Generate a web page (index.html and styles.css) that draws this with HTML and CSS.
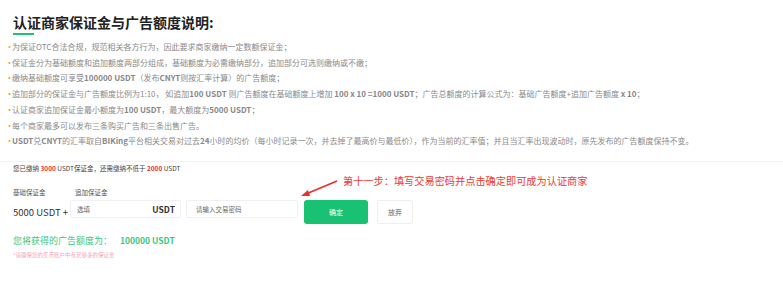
FILE: index.html
```html
<!DOCTYPE html>
<html lang="zh-CN">
<head>
    <meta charset="UTF-8">
    <meta name="viewport" content="width=device-width, initial-scale=1.0">
    <title>认证商家保证金</title>
    <link rel="stylesheet" href="styles.css">
</head>
<body>
    <div class="page">
        <h2 class="title">认证商家保证金与广告额度说明:</h2>
        <div class="title-bar"></div>
        <ul class="rules">
            <li>为保证OTC合法合规，规范相关各方行为，因此要求商家缴纳一定数额保证金；</li>
            <li>保证金分为基础额度和追加额度两部分组成，基础额度为必需缴纳部分，追加部分可选则缴纳或不缴；</li>
            <li>缴纳基础额度可享受<b>100000 USDT</b>（发布<b>CNYT</b>则按汇率计算）的广告额度；</li>
            <li>追加部分的保证金与广告额度比例为1:10， 如追加<b>100 USDT</b> 则广告额度在基础额度上增加 <b>100 x 10 =1000 USDT</b>；广告总额度的计算公式为：基础广告额度+追加广告额度 <b>x 10</b>；</li>
            <li>认证商家追加保证金最小额度为<b>100 USDT</b>，最大额度为<b>5000 USDT</b>；</li>
            <li>每个商家最多可以发布三条购买广告和三条出售广告。</li>
            <li><b>USDT</b>兑<b>CNYT</b>的汇率取自<b>BIKing</b>平台相关交易对过去<b>24</b>小时的均价（每小时记录一次，并去掉了最高价与最低价），作为当前的汇率值；并且当汇率出现波动时，原先发布的广告额度保持不变。</li>
        </ul>

        <div class="deposit">
            <p class="notice">您已缴纳 <span class="red">3000</span> USDT保证金，还需缴纳不低于 <span class="red">2000</span> USDT</p>
            <div class="labels">
                <span class="label-base">基础保证金</span>
                <span>追加保证金</span>
            </div>
            <div class="form-row">
                <span class="base-amount">5000 USDT +</span>
                <div class="field field-extra">
                    <span class="placeholder">选填</span>
                    <b class="unit">USDT</b>
                </div>
                <div class="field field-pwd">
                    <span class="placeholder">请输入交易密码</span>
                </div>
                <button class="btn-ok">确定</button>
                <button class="btn-cancel">放弃</button>
            </div>
            <p class="quota">您将获得的广告额度为： <b>100000 USDT</b></p>
            <p class="hint">*请确保您的买币账户中有足够多的保证金</p>

            <div class="callout">第十一步：填写交易密码并点击确定即可成为认证商家</div>
            <svg class="arrow" width="40" height="20" viewBox="0 0 40 20">
                <line x1="37" y1="2" x2="6" y2="15" stroke="#e8302c" stroke-width="1.8"/>
                <polygon points="1,17 8,11 10,17" fill="#e8302c"/>
            </svg>
        </div>
    </div>
</body>
</html>
```

FILE: styles.css
```css
body {
    margin: 0;
    background-color: #fff;
    font-family: "Noto Sans CJK SC", "Noto Sans", sans-serif;
    color: #333;
}

.page {
    padding: 12px 0 0 13px;
}

.title {
    margin: 0;
    font-size: 14px;
    line-height: 20px;
    font-weight: bold;
    color: #222;
}

.title-bar {
    width: 21px;
    height: 2px;
    margin-top: 1px;
    background-color: #1dc27a;
}

.rules {
    list-style: none;
    margin: 4px 0 0;
    padding: 0;
}

.rules li {
    font-size: 8px;
    line-height: 15.7px;
    color: #8a8a8a;
    white-space: nowrap;
}

.rules li b {
    font-weight: bold;
    color: #888;
}

.rules li::before {
    content: "•";
    color: #f5a623;
    display: inline-block;
    width: 7px;
    margin-left: -8px;
    font-size: 9px;
}

.deposit {
    position: relative;
    margin: 12px 0 0 -13px;
    padding-left: 13px;
    border-top: 1px solid #f1f1f1;
}

.notice {
    margin: 1px 0 0;
    font-size: 6.5px;
    line-height: 10px;
    color: #444;
}

.red {
    color: #f0302a;
    font-weight: bold;
}

.labels {
    display: flex;
    margin-top: 14px;
    font-size: 6.5px;
    line-height: 10px;
    color: #555;
}

.label-base {
    width: 62px;
}

.form-row {
    display: flex;
    align-items: flex-start;
    margin-top: 3px;
}

.base-amount {
    width: 57px;
    font-size: 9.5px;
    line-height: 24px;
    color: #333;
    white-space: nowrap;
}

.field {
    display: flex;
    align-items: center;
    justify-content: space-between;
    box-sizing: border-box;
    height: 18px;
    padding: 0 5px 0 6px;
    border: 1px solid #eef0f5;
    border-radius: 2px;
}

.field-extra {
    width: 111px;
}

.field-pwd {
    width: 112px;
    margin-left: 5px;
    padding-left: 9px;
}

.placeholder {
    font-size: 6.5px;
    color: #666;
}

.unit {
    font-size: 8.5px;
    color: #333;
}

.btn-ok, .btn-cancel {
    box-sizing: border-box;
    height: 24px;
    border-radius: 3px;
    font-family: inherit;
    font-size: 7px;
    cursor: pointer;
}

.btn-ok {
    width: 64px;
    margin-left: 6px;
    border: none;
    background-color: #19c173;
    color: #fff;
}

.btn-cancel {
    width: 36px;
    margin-left: 9px;
    border: 1px solid #eeeeee;
    background-color: #fff;
    color: #666;
}

.quota {
    margin: 10px 0 0;
    font-size: 9px;
    line-height: 12px;
    color: #3cc77e;
}

.quota b {
    margin-left: 6px;
    font-size: 8.5px;
}

.hint {
    margin: 3px 0 0;
    font-size: 5.5px;
    line-height: 10px;
    color: #f6a5b7;
}

.callout {
    position: absolute;
    left: 343px;
    top: 12px;
    font-size: 10.2px;
    line-height: 14px;
    color: #ee3a32;
    white-space: nowrap;
}

.arrow {
    position: absolute;
    left: 300px;
    top: 17px;
}
```
